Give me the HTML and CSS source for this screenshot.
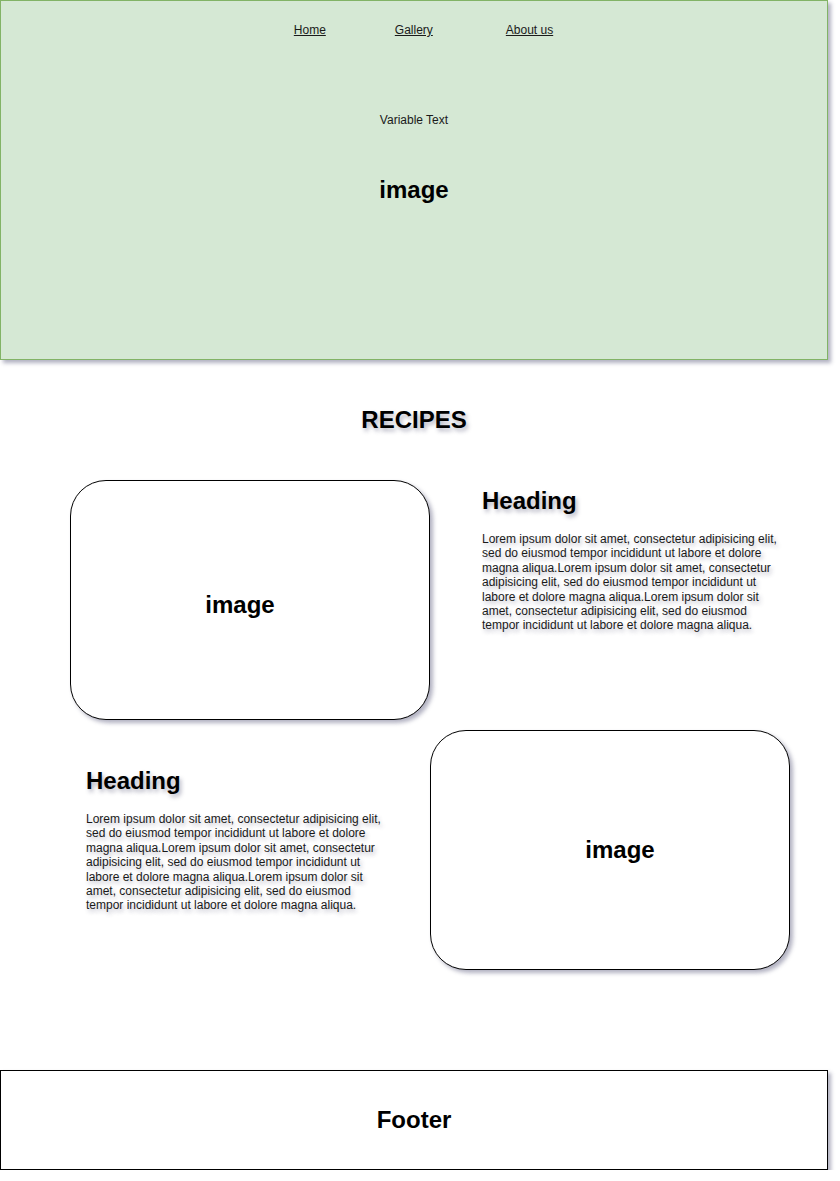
FILE: index.html
```html
<!doctype html>
<html lang="en">
<head>
    <meta charset="UTF-8" />
    <title>Recipes</title>
    <link rel="stylesheet" href="styles.css">
</head>
<body>
<div class="page">
    <header class="hero">
        <nav class="nav">
            <a href="javascript:;">Home</a>
            <a href="javascript:;" class="gallery">Gallery</a>
            <a href="javascript:;" class="about">About us</a>
        </nav>
        <p class="tagline">Variable Text</p>
        <p class="hero-img">image</p>
    </header>

    <h1 class="title">RECIPES</h1>

    <section class="row row-first">
        <div class="card">image</div>
        <div class="text">
            <h2>Heading</h2>
            <p>Lorem ipsum dolor sit amet, consectetur adipisicing elit, sed do eiusmod tempor incididunt ut labore et dolore magna aliqua.Lorem ipsum dolor sit amet, consectetur adipisicing elit, sed do eiusmod tempor incididunt ut labore et dolore magna aliqua.Lorem ipsum dolor sit amet, consectetur adipisicing elit, sed do eiusmod tempor incididunt ut labore et dolore magna aliqua.</p>
        </div>
    </section>

    <section class="row row-second">
        <div class="text">
            <h2>Heading</h2>
            <p>Lorem ipsum dolor sit amet, consectetur adipisicing elit, sed do eiusmod tempor incididunt ut labore et dolore magna aliqua.Lorem ipsum dolor sit amet, consectetur adipisicing elit, sed do eiusmod tempor incididunt ut labore et dolore magna aliqua.Lorem ipsum dolor sit amet, consectetur adipisicing elit, sed do eiusmod tempor incididunt ut labore et dolore magna aliqua.</p>
        </div>
        <div class="card">image</div>
    </section>

    <footer class="footer">Footer</footer>
</div>
</body>
</html>
```

FILE: styles.css
```css
body{
    margin: 0;
    background: #fff;
    font-family: "Liberation Sans", Arial, sans-serif;
    color: #000;
}
.page{
    width: 828px;
}
.hero{
    height: 360px;
    box-sizing: border-box;
    background: #d5e8d4;
    border: 1px solid #82b366;
    box-shadow: 3px 3px 4px rgba(60,60,100,.4);
    padding-top: 22px;
    text-align: center;
}
.nav{
    display: flex;
    justify-content: center;
    padding-left: 19px;
    font-size: 12px;
    line-height: 14px;
}
.nav a{
    color: #1a1a1a;
    text-decoration: underline;
}
.nav .gallery{
    margin-left: 69px;
}
.nav .about{
    margin-left: 73px;
}
.tagline{
    margin: 76px 0 0;
    font-size: 12px;
    line-height: 14px;
    color: #1a1a1a;
}
.hero-img{
    margin: 49px 0 0;
    font-size: 24px;
    line-height: 28px;
    font-weight: bold;
}
.title{
    margin: 46px 0 0;
    text-align: center;
    font-size: 24px;
    line-height: 28px;
    text-shadow: 2px 3px 4px rgba(40,40,80,.35);
}
.row{
    display: flex;
    align-items: flex-start;
}
.row-first{
    margin-top: 46px;
    padding-left: 70px;
    gap: 52px;
}
.row-second{
    margin-top: 10px;
    padding-left: 86px;
    gap: 44px;
}
.card{
    width: 360px;
    height: 240px;
    box-sizing: border-box;
    border: 1px solid #000;
    border-radius: 36px;
    background: #fff;
    box-shadow: 3px 3px 4px rgba(60,60,100,.4);
    display: flex;
    align-items: center;
    justify-content: center;
    font-size: 24px;
    font-weight: bold;
}
.row-first .card{
    padding: 10px 20px 0 0;
}
.row-second .card{
    padding-left: 20px;
}
.text{
    width: 300px;
}
.row-first .text{
    margin-top: 7px;
}
.row-second .text{
    margin-top: 37px;
}
.text h2{
    margin: 0;
    font-size: 24px;
    line-height: 28px;
    text-shadow: 2px 3px 4px rgba(40,40,80,.35);
}
.text p{
    margin: 17px 0 0;
    font-size: 12px;
    line-height: 14.4px;
    color: #1a1a1a;
    text-shadow: 2px 3px 4px rgba(40,40,80,.3);
}
.footer{
    margin-top: 100px;
    height: 100px;
    box-sizing: border-box;
    border: 1.5px solid #000;
    box-shadow: 3px 3px 4px rgba(60,60,100,.4);
    display: flex;
    align-items: center;
    justify-content: center;
    font-size: 24px;
    font-weight: bold;
}
```
